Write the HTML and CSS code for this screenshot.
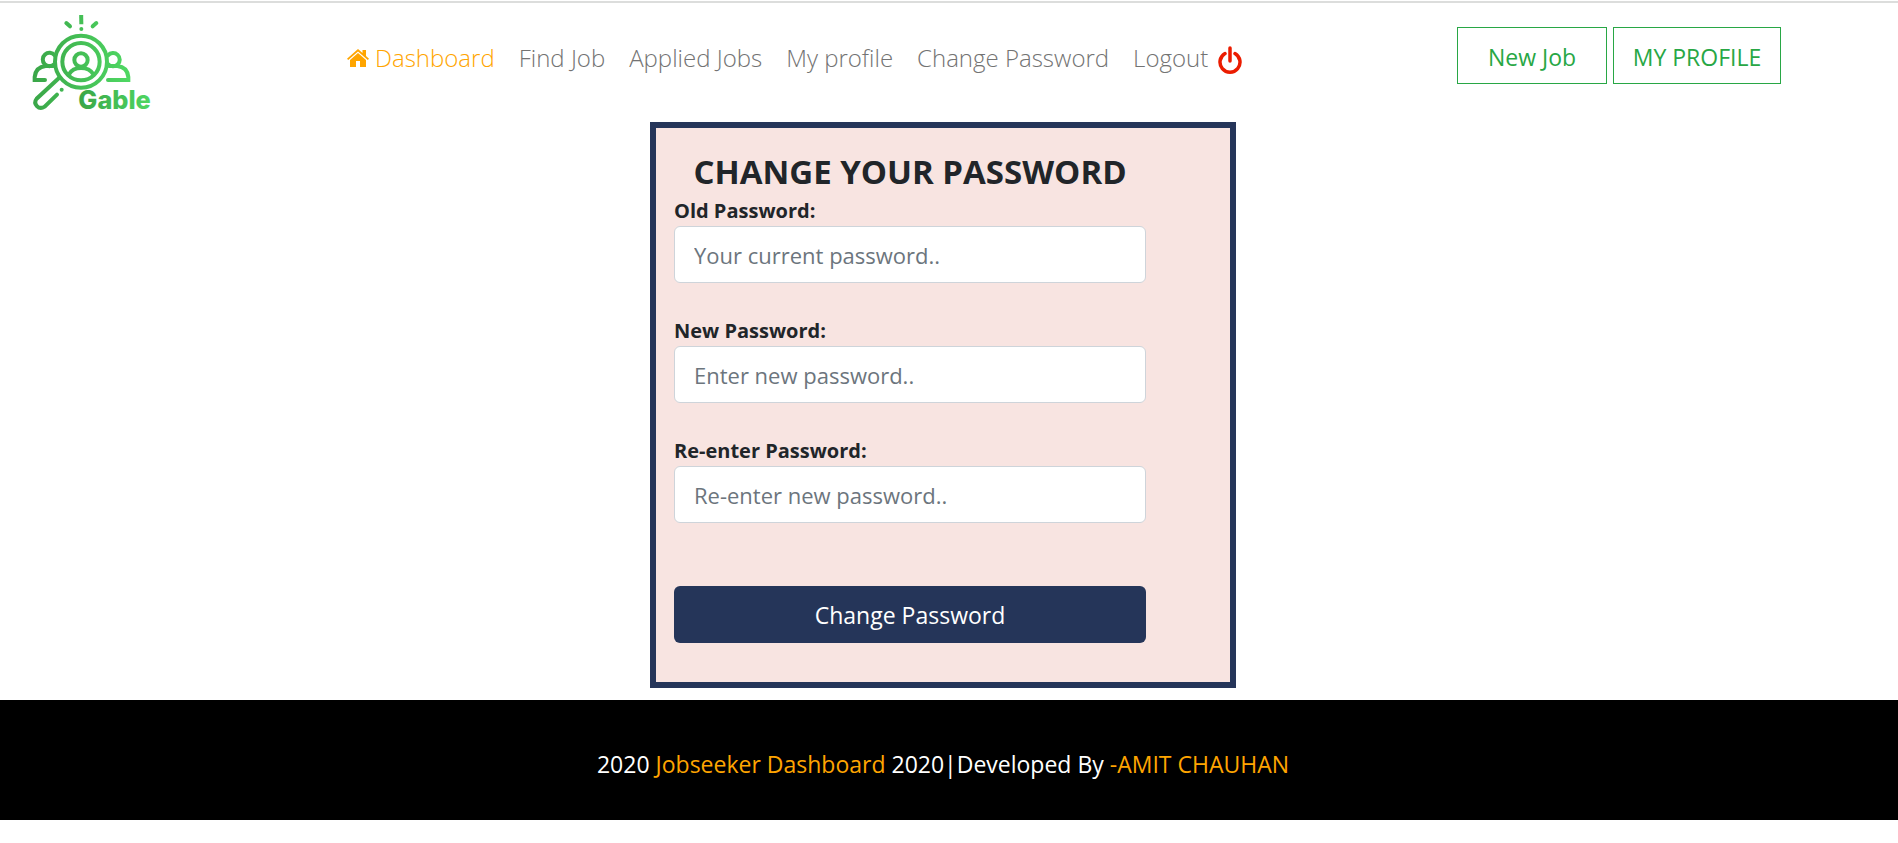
FILE: index.html
```html
<!DOCTYPE html>
<html lang="en">
<head>
<meta charset="utf-8">
<meta name="viewport" content="width=device-width, initial-scale=1">
<title>Change Password</title>
<link rel="stylesheet" href="styles.css">
</head>
<body>
<header class="site-header">
  <a class="logo" href="#" aria-label="Gable home">
    <svg class="logo-image" viewBox="99 45 363 285">
      <defs>
        <linearGradient id="leaf" gradientUnits="userSpaceOnUse" x1="99" y1="0" x2="390" y2="0">
          <stop offset="0" stop-color="#3aa648"/>
          <stop offset="1" stop-color="#4fd863"/>
        </linearGradient>
        <linearGradient id="word" gradientUnits="userSpaceOnUse" x1="237" y1="0" x2="462" y2="0">
          <stop offset="0" stop-color="#3aa648"/>
          <stop offset="1" stop-color="#4fd863"/>
        </linearGradient>
      </defs>
      <g fill="none" stroke="url(#leaf)" stroke-width="12" stroke-linecap="round">
        <path d="M243.500 45L244 73" stroke-linecap="butt"/>
        <path d="M199 69L210 79M289 69L278 79"/>
        <circle cx="243" cy="185" r="78"/>
        <circle cx="243" cy="185" r="56"/>
        <circle cx="243" cy="180" r="20"/>
        <path d="M207 223C221 198 265 198 280 223"/>
        <path d="M163 192A20 20 0 1 1 164 166M324 166A20 20 0 1 1 324 192"/>
        <path d="M135 240H104V231Q107 201 137 198H160M324 240H385V231Q382 201 352 198H327"/>
        <path d="M177 234L110 296C98 312 116 331 134 320L171 284"/>
      </g>
      <g fill="url(#leaf)">
        <circle cx="244" cy="87" r="6"/>
        <circle cx="185" cy="269" r="6"/>
      </g>
      <text class="logo-word" x="235" y="326" fill="url(#word)">Gable</text>
    </svg>
  </a>
  <nav class="main-nav">
    <a class="nav-link active" href="#">
      <svg class="home-icon" viewBox="0 0 22 18"><path d="M11 0L15.500 4V1H19V7L22 9.700L20.800 11L11 2.500L1.200 11L0 9.700ZM11 4L19 11V18H13V12H9V18H3V11Z"/></svg>
      Dashboard</a>
    <a class="nav-link" href="#">Find Job</a>
    <a class="nav-link" href="#">Applied Jobs</a>
    <a class="nav-link" href="#">My profile</a>
    <a class="nav-link" href="#">Change Password</a>
    <a class="nav-link logout" href="#">Logout
      <svg class="power-icon" viewBox="0 0 24 28"><path d="M7 7.500A10 10 0 1 0 17 7.500M12 2V15"/></svg></a>
  </nav>
  <div class="actions">
    <button class="outline-button" type="button">New Job</button>
    <button class="outline-button profile" type="button">MY PROFILE</button>
  </div>
</header>
<main class="content">
  <form class="card">
    <h1 class="card-title">CHANGE YOUR PASSWORD</h1>
    <div class="fields">
      <div class="field">
        <label class="label" for="old">Old Password:</label>
        <input class="input" id="old" type="password" placeholder="Your current password..">
      </div>
      <div class="field">
        <label class="label" for="new">New Password:</label>
        <input class="input" id="new" type="password" placeholder="Enter new password..">
      </div>
      <div class="field">
        <label class="label" for="again">Re-enter Password:</label>
        <input class="input" id="again" type="password" placeholder="Re-enter new password..">
      </div>
    </div>
    <button class="submit" type="submit">Change Password</button>
  </form>
</main>
<footer class="site-footer">
  <p class="credit">2020 <a class="credit-link" href="#">Jobseeker Dashboard</a> 2020|Developed By <a class="credit-link" href="#">-AMIT CHAUHAN</a></p>
</footer>
</body>
</html>
```
FILE: styles.css
```css
*, *::before, *::after { box-sizing: border-box; }
body {
  margin: 0;
  padding-top: 1px;
  background: #fff;
  color: #212529;
  font-family: "Segoe UI", "Open Sans", "Noto Sans", sans-serif;
  font-size: 23px;
  line-height: 36px;
}
a { text-decoration: none; }
button, input { font: inherit; }

.site-header {
  display: grid;
  grid-template-columns: 314fr 1110fr 441fr;
  align-items: start;
  padding: 12px 0 12px 33px;
  border-top: 2px solid #dcdddc;
}
.logo { display: block; }
.logo-image { display: block; width: 121px; height: 95px; overflow: visible; }
.logo-word { font-family: Inter, sans-serif; font-size: 76px; font-weight: 800; }
.main-nav { display: flex; gap: 24px; margin-top: 25px; font-size: 24px; }
.nav-link { color: #737373; font-weight: 300; white-space: nowrap; }
.nav-link.active { display: flex; align-items: center; gap: 6px; color: #ffa500; }
.home-icon { width: 22px; height: 18px; fill: currentColor; }
.logout { display: flex; align-items: center; gap: 10px; }
.power-icon { width: 24px; height: 28px; margin-top: 4px; fill: none; stroke: #eb1c00; stroke-width: 3.500; stroke-linecap: round; }
.actions { display: flex; gap: 6px; margin-top: 12px; }
.outline-button {
  width: 150px;
  height: 57px;
  padding: 2px 0 0;
  border: 1px solid #28a745;
  background: transparent;
  color: #28a745;
  white-space: nowrap;
}
.outline-button.profile { width: 168px; }

.content { display: flex; justify-content: center; padding: 0 12px 12px 0; }
.card {
  width: 586px;
  padding: 22px 84px 39px 18px;
  border: 6px solid #253559;
  background: #f8e4e1;
}
.card-title { margin: 0; font-size: 33px; line-height: 44px; font-weight: 700; text-align: center; white-space: nowrap; }
.fields { display: grid; gap: 31px; }
.label { display: block; padding-top: 2px; font-size: 20px; line-height: 30px; font-weight: 700; }
.input {
  display: block;
  width: 100%;
  height: 57px;
  padding: 0 19px;
  border: 1px solid #ced4da;
  border-radius: 6px;
  background: #fff;
  color: #495057;
  font-size: 22px;
}
.input::placeholder { color: #6c757d; opacity: 1; }
.submit {
  display: block;
  width: 100%;
  height: 57px;
  margin-top: 63px;
  border: 0;
  border-radius: 6px;
  background: #253559;
  color: #fff;
}

.site-footer { padding: 46px 12px 38px 0; background: #000; color: #fff; text-align: center; }
.credit { margin: 0; }
.credit-link { color: #ffa500; }
```
